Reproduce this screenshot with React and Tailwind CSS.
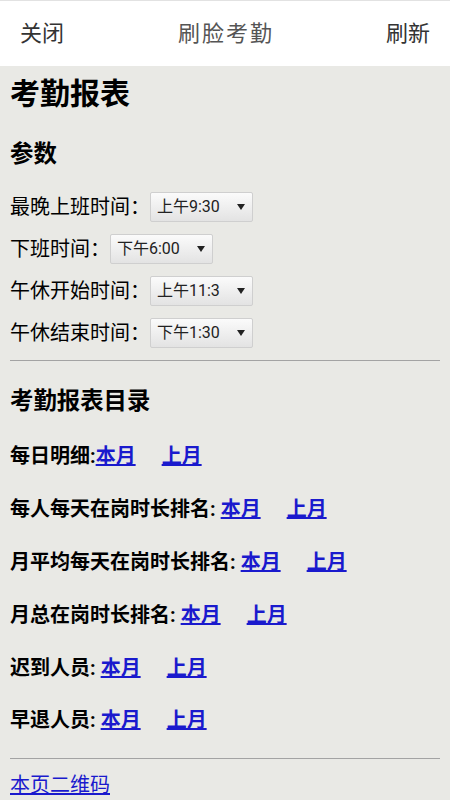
import React from 'react';

const FONT = { fontFamily: 'Roboto, "Noto Sans CJK SC", sans-serif' };

// third value is clipped by the narrow dropdown in the screenshot
const params = [
  { label: '最晚上班时间：', value: '上午9:30' },
  { label: '下班时间：', value: '下午6:00' },
  { label: '午休开始时间：', value: '上午11:3' },
  { label: '午休结束时间：', value: '下午1:30' },
];

const reports = [
  { name: '每日明细:', space: false },
  { name: '每人每天在岗时长排名:', space: true },
  { name: '月平均每天在岗时长排名:', space: true },
  { name: '月总在岗时长排名:', space: true },
  { name: '迟到人员:', space: true },
  { name: '早退人员:', space: true },
];

// looks like the Android webview dropdown
const FakeSelect = ({ value }) => (
  <div className="flex items-center w-[103px] h-[30px] border border-[#cfcfcf] rounded-[2px] bg-gradient-to-b from-[#fbfbfb] to-[#e3e3e3] text-[16px] text-[#222]">
    <div className="w-[76px] pl-[6px] whitespace-nowrap">{value}</div>
    <svg width="8" height="6" viewBox="0 0 8 6" className="ml-[10px]">
      <path d="M0 0 L8 0 L4 6 Z" fill="#222" />
    </svg>
  </div>
);

const App = () => {
  return (
    <div className="w-[450px] h-[800px] overflow-hidden bg-[#e9e9e5]" style={FONT}>
      {/* top bar */}
      <div className="h-[66px] bg-white border-t border-[#e2e2e2] flex items-center justify-between px-[20px] text-[22px]">
        <span className="text-[#333]">关闭</span>
        <span className="text-[#555] tracking-[2px] pl-[2px]">刷脸考勤</span>
        <span className="text-[#333]">刷新</span>
      </div>

      <div className="px-[10px] text-black">
        <h2 className="h-[54px] flex items-center text-[30px] font-bold">考勤报表</h2>

        <h3 className="h-[66px] pt-[4px] flex items-center text-[23.4px] font-bold">参数</h3>

        {params.map((p) => (
          <div key={p.label} className="h-[42px] flex items-center text-[20px]">
            <span>{p.label}</span>
            <FakeSelect value={p.value} />
          </div>
        ))}

        <div className="mt-[6px] border-t border-[#a3a3a3]" />

        <h3 className="mt-[21px] h-[40px] flex items-center text-[23.4px] font-bold">考勤报表目录</h3>

        <div className="mt-[8px]">
          {reports.map((r) => (
            <div key={r.name} className="h-[52.8px] flex items-center text-[20px] font-bold">
              <span>{r.name}</span>
              <a href="#" className={`text-[#1a1acd] underline ${r.space ? 'ml-[5px]' : ''}`}>本月</a>
              <a href="#" className="text-[#1a1acd] underline ml-[26px]">上月</a>
            </div>
          ))}
        </div>

        <div className="mt-[11px] border-t border-[#a3a3a3]" />

        <div className="h-[52px] flex items-center text-[20px]">
          <a href="#" className="text-[#1a1acd] underline">本页二维码</a>
        </div>
      </div>
    </div>
  );
};

export default App;
